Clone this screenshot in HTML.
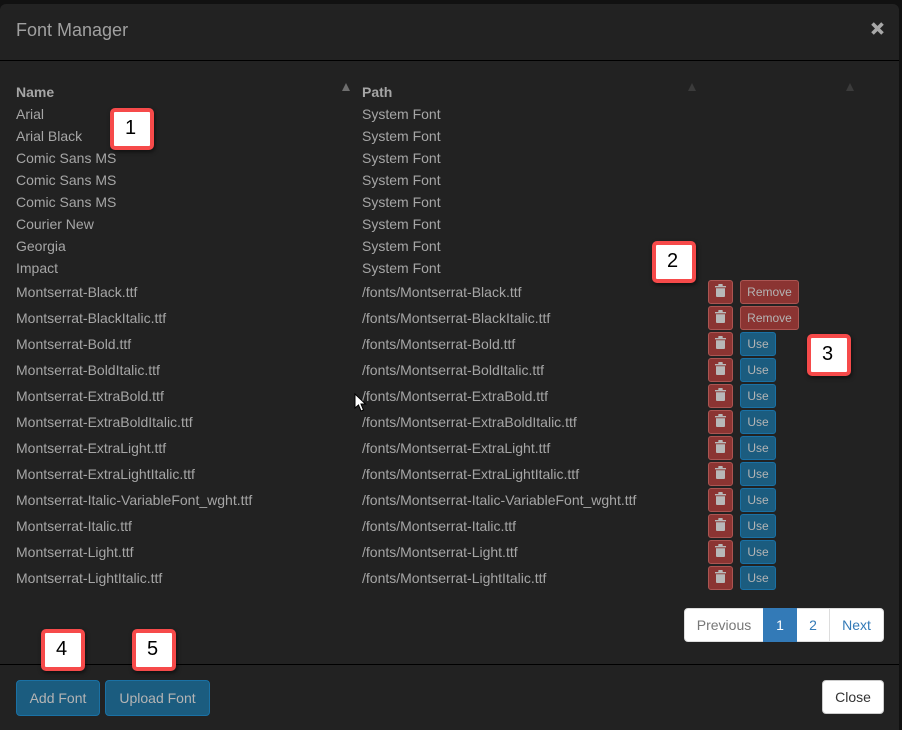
<!DOCTYPE html>
<html><head><meta charset="utf-8"><style>
html,body{margin:0;padding:0;width:902px;height:730px;overflow:hidden;background:#111;font-family:"Liberation Sans",Arial,sans-serif;font-size:14px;color:#a6a6a6}
body{position:relative}
*{box-sizing:border-box}
.a{position:absolute;white-space:nowrap}
#m{position:absolute;left:0;top:4px;width:899px;height:726px;background:#222;border-radius:6px 6px 0 0}
.t{line-height:20px}
.btn{position:absolute;border-radius:3px;font-size:12px;line-height:22px;text-align:center;color:#b4b4b4;border:1px solid}
.r{background:#8b3432;border-color:#ab5552}
.u{background:#1b5c7f;border-color:#1a71a5}
.ic{position:absolute;left:4px;top:2px}
.lab{position:absolute;width:44px;height:42px;padding-right:3px;background:#fff;border:4px solid #f64a4a;border-radius:5px;box-shadow:1px 2px 4px rgba(0,0,0,.55);color:#000;font-size:20px;line-height:33px;text-align:center}
.tri{position:absolute;width:0;height:0;border-left:4.5px solid transparent;border-right:4.5px solid transparent;border-bottom:8px solid #3b3b3b}
.pg{position:absolute;top:608px;height:34px;line-height:32px;text-align:center;background:#fff;color:#337ab7;border:1px solid #ddd}
</style></head><body>
<div id="m"></div>
<div class="a" style="left:16px;top:20px;font-size:18px;line-height:20px;color:#a0a0a0">Font Manager</div>
<svg class="a" style="left:870px;top:21px" width="15" height="15" viewBox="0 0 15 15"><path d="M2.5 2.5L12.5 12.5M12.5 2.5L2.5 12.5" stroke="#a8a8a8" stroke-width="3.6"/></svg>
<div class="a" style="left:0;top:60px;width:899px;height:1px;background:#000"></div>
<div class="a" style="left:0;top:664px;width:899px;height:1px;background:#000"></div>

<div class="a t" style="left:16px;top:82px;font-weight:bold">Name</div>
<div class="a t" style="left:362px;top:82px;font-weight:bold">Path</div>
<div class="tri" style="left:342px;top:83px;border-bottom-color:#6e6e6e"></div>
<div class="tri" style="left:688px;top:83px"></div>
<div class="tri" style="left:846px;top:83px"></div>

<div class="a t" style="left:16px;top:104px">Arial</div><div class="a t" style="left:362px;top:104px">System Font</div>
<div class="a t" style="left:16px;top:126px">Arial Black</div><div class="a t" style="left:362px;top:126px">System Font</div>
<div class="a t" style="left:16px;top:148px">Comic Sans MS</div><div class="a t" style="left:362px;top:148px">System Font</div>
<div class="a t" style="left:16px;top:170px">Comic Sans MS</div><div class="a t" style="left:362px;top:170px">System Font</div>
<div class="a t" style="left:16px;top:192px">Comic Sans MS</div><div class="a t" style="left:362px;top:192px">System Font</div>
<div class="a t" style="left:16px;top:214px">Courier New</div><div class="a t" style="left:362px;top:214px">System Font</div>
<div class="a t" style="left:16px;top:236px">Georgia</div><div class="a t" style="left:362px;top:236px">System Font</div>
<div class="a t" style="left:16px;top:258px">Impact</div><div class="a t" style="left:362px;top:258px">System Font</div>

<div class="a t" style="left:16px;top:282px">Montserrat-Black.ttf</div><div class="a t" style="left:362px;top:282px">/fonts/Montserrat-Black.ttf</div>
<div class="a t" style="left:16px;top:308px">Montserrat-BlackItalic.ttf</div><div class="a t" style="left:362px;top:308px">/fonts/Montserrat-BlackItalic.ttf</div>
<div class="a t" style="left:16px;top:334px">Montserrat-Bold.ttf</div><div class="a t" style="left:362px;top:334px">/fonts/Montserrat-Bold.ttf</div>
<div class="a t" style="left:16px;top:360px">Montserrat-BoldItalic.ttf</div><div class="a t" style="left:362px;top:360px">/fonts/Montserrat-BoldItalic.ttf</div>
<div class="a t" style="left:16px;top:386px">Montserrat-ExtraBold.ttf</div><div class="a t" style="left:362px;top:386px">/fonts/Montserrat-ExtraBold.ttf</div>
<div class="a t" style="left:16px;top:412px">Montserrat-ExtraBoldItalic.ttf</div><div class="a t" style="left:362px;top:412px">/fonts/Montserrat-ExtraBoldItalic.ttf</div>
<div class="a t" style="left:16px;top:438px">Montserrat-ExtraLight.ttf</div><div class="a t" style="left:362px;top:438px">/fonts/Montserrat-ExtraLight.ttf</div>
<div class="a t" style="left:16px;top:464px">Montserrat-ExtraLightItalic.ttf</div><div class="a t" style="left:362px;top:464px">/fonts/Montserrat-ExtraLightItalic.ttf</div>
<div class="a t" style="left:16px;top:490px">Montserrat-Italic-VariableFont_wght.ttf</div><div class="a t" style="left:362px;top:490px">/fonts/Montserrat-Italic-VariableFont_wght.ttf</div>
<div class="a t" style="left:16px;top:516px">Montserrat-Italic.ttf</div><div class="a t" style="left:362px;top:516px">/fonts/Montserrat-Italic.ttf</div>
<div class="a t" style="left:16px;top:542px">Montserrat-Light.ttf</div><div class="a t" style="left:362px;top:542px">/fonts/Montserrat-Light.ttf</div>
<div class="a t" style="left:16px;top:568px">Montserrat-LightItalic.ttf</div><div class="a t" style="left:362px;top:568px">/fonts/Montserrat-LightItalic.ttf</div>

<svg width="0" height="0" style="position:absolute"><defs><g id="tr"><path d="M2 3H5.3V1.6Q5.3 1 6 1H9Q9.7 1 9.7 1.6V3H13V4.4H2Z" fill="#b8b8b8"/><path d="M3 5.2H12V13Q12 14 11 14H4Q3 14 3 13Z" fill="#b8b8b8"/></g></defs></svg>

<div class="btn r" style="left:708px;top:280px;width:25px;height:24px"><svg class="ic" width="15" height="15"><use href="#tr"/></svg></div>
<div class="btn r" style="left:708px;top:306px;width:25px;height:24px"><svg class="ic" width="15" height="15"><use href="#tr"/></svg></div>
<div class="btn r" style="left:708px;top:332px;width:25px;height:24px"><svg class="ic" width="15" height="15"><use href="#tr"/></svg></div>
<div class="btn r" style="left:708px;top:358px;width:25px;height:24px"><svg class="ic" width="15" height="15"><use href="#tr"/></svg></div>
<div class="btn r" style="left:708px;top:384px;width:25px;height:24px"><svg class="ic" width="15" height="15"><use href="#tr"/></svg></div>
<div class="btn r" style="left:708px;top:410px;width:25px;height:24px"><svg class="ic" width="15" height="15"><use href="#tr"/></svg></div>
<div class="btn r" style="left:708px;top:436px;width:25px;height:24px"><svg class="ic" width="15" height="15"><use href="#tr"/></svg></div>
<div class="btn r" style="left:708px;top:462px;width:25px;height:24px"><svg class="ic" width="15" height="15"><use href="#tr"/></svg></div>
<div class="btn r" style="left:708px;top:488px;width:25px;height:24px"><svg class="ic" width="15" height="15"><use href="#tr"/></svg></div>
<div class="btn r" style="left:708px;top:514px;width:25px;height:24px"><svg class="ic" width="15" height="15"><use href="#tr"/></svg></div>
<div class="btn r" style="left:708px;top:540px;width:25px;height:24px"><svg class="ic" width="15" height="15"><use href="#tr"/></svg></div>
<div class="btn r" style="left:708px;top:566px;width:25px;height:24px"><svg class="ic" width="15" height="15"><use href="#tr"/></svg></div>

<div class="btn r" style="left:740px;top:280px;width:59px;height:24px">Remove</div>
<div class="btn r" style="left:740px;top:306px;width:59px;height:24px">Remove</div>
<div class="btn u" style="left:740px;top:332px;width:36px;height:24px">Use</div>
<div class="btn u" style="left:740px;top:358px;width:36px;height:24px">Use</div>
<div class="btn u" style="left:740px;top:384px;width:36px;height:24px">Use</div>
<div class="btn u" style="left:740px;top:410px;width:36px;height:24px">Use</div>
<div class="btn u" style="left:740px;top:436px;width:36px;height:24px">Use</div>
<div class="btn u" style="left:740px;top:462px;width:36px;height:24px">Use</div>
<div class="btn u" style="left:740px;top:488px;width:36px;height:24px">Use</div>
<div class="btn u" style="left:740px;top:514px;width:36px;height:24px">Use</div>
<div class="btn u" style="left:740px;top:540px;width:36px;height:24px">Use</div>
<div class="btn u" style="left:740px;top:566px;width:36px;height:24px">Use</div>

<div class="pg" style="left:684px;width:80px;color:#777;border-radius:4px 0 0 4px">Previous</div>
<div class="pg" style="left:763px;width:34px;background:#337ab7;border-color:#337ab7;color:#fff">1</div>
<div class="pg" style="left:797px;width:33px;border-left:0">2</div>
<div class="pg" style="left:829px;width:55px;border-radius:0 4px 4px 0">Next</div>

<div class="btn u" style="left:16px;top:680px;width:84px;height:36px;font-size:14px;line-height:34px;border-radius:4px">Add Font</div>
<div class="btn u" style="left:105px;top:680px;width:105px;height:36px;font-size:14px;line-height:34px;border-radius:4px">Upload Font</div>
<div class="btn" style="left:822px;top:680px;width:62px;height:34px;font-size:14px;line-height:32px;border-radius:4px;background:#fff;border-color:#ccc;color:#333">Close</div>

<div class="lab" style="left:110px;top:108px">1</div>
<div class="lab" style="left:652px;top:241px">2</div>
<div class="lab" style="left:807px;top:334px">3</div>
<div class="lab" style="left:41px;top:629px">4</div>
<div class="lab" style="left:132px;top:629px">5</div>

<svg class="a" style="left:354px;top:393px" width="13" height="20" viewBox="0 0 13 20"><path d="M1 1V15L4.5 12L7 18L9.5 17L7 11H11.5Z" fill="#fff" stroke="#000" stroke-width="1"/></svg>
</body></html>
